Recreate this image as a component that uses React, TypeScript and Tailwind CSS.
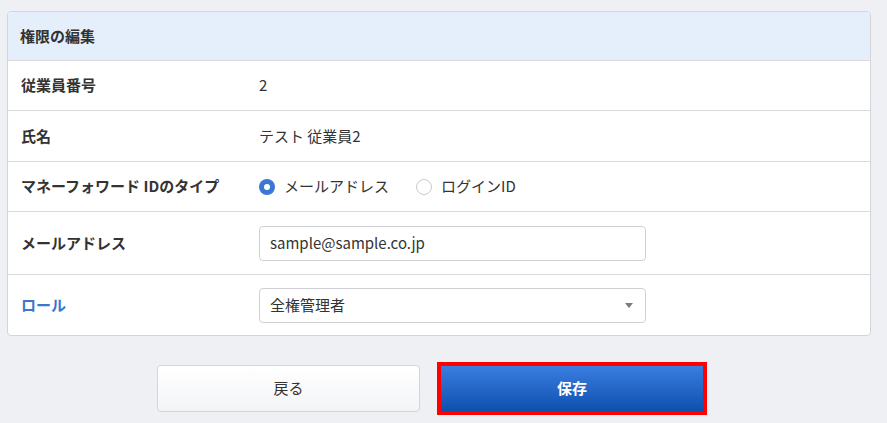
import React from "react";

const font = { fontFamily: '"Noto Sans CJK JP", "Noto Sans", sans-serif' };

function Row({ label, blue, children, h }: { label: string; blue?: boolean; children: React.ReactNode; h: string }) {
  return (
    <div className={`flex items-center border-t border-[#d8dadf] ${h}`}>
      <div className={`w-[251px] pl-[13px] text-[15px] font-bold ${blue ? "text-[#3a76cc]" : "text-[#333]"}`}>{label}</div>
      <div className="flex-1 text-[15px] text-[#333]">{children}</div>
    </div>
  );
}

export default function App() {
  return (
    <div style={font} className="w-[887px] h-[423px] bg-[#eff0f4] pt-[11px] pl-[7px] pr-[16px] overflow-hidden">
      <div className="bg-white border border-[#d3d5da] rounded-[4px] overflow-hidden">
        <div className="h-[48px] bg-[#e5effc] flex items-center pl-[12px] text-[15px] font-bold text-[#333]">権限の編集</div>
        <Row label="従業員番号" h="h-[50px]">2</Row>
        <Row label="氏名" h="h-[51px]">テスト 従業員2</Row>
        <Row label="マネーフォワード IDのタイプ" h="h-[50px]">
          <div className="flex items-center">
            <span className="w-[16px] h-[16px] rounded-full bg-[#3a78d4] flex items-center justify-center mr-[9px]">
              <span className="w-[6px] h-[6px] rounded-full bg-white" />
            </span>
            <span>メールアドレス</span>
            <span className="w-[16px] h-[16px] rounded-full border border-[#c8cacf] bg-white ml-[27px] mr-[9px]" />
            <span>ログインID</span>
          </div>
        </Row>
        <Row label="メールアドレス" h="h-[63px]">
          <div className="w-[387px] h-[35px] border border-[#cfd1d6] rounded-[4px] flex items-center pl-[10px] text-[15px] text-[#333]">
            sample@sample.co.jp
          </div>
        </Row>
        <Row label="ロール" blue h="h-[61px]">
          <div className="w-[387px] h-[35px] border border-[#cfd1d6] rounded-[4px] flex items-center justify-between pl-[10px] pr-[12px] text-[15px] text-[#333]">
            <span>全権管理者</span>
            <svg width="8" height="5" viewBox="0 0 8 5"><path d="M0 0h8L4 5z" fill="#777b84" /></svg>
          </div>
        </Row>
      </div>
      <div className="flex items-center mt-[26px] ml-[150px]">
        <button className="w-[263px] h-[47px] rounded-[4px] border border-[#d3d5da] bg-gradient-to-b from-white to-[#f3f4f6] text-[15px] text-[#333]">戻る</button>
        <div className="ml-[17px] border-[3px] border-[#ff0000] p-[1px] bg-[#ff0000]">
          <button className="w-[262px] h-[45px] bg-gradient-to-b from-[#3a7ee2] to-[#0b50ad] text-white text-[15px] font-bold">保存</button>
        </div>
      </div>
    </div>
  );
}
